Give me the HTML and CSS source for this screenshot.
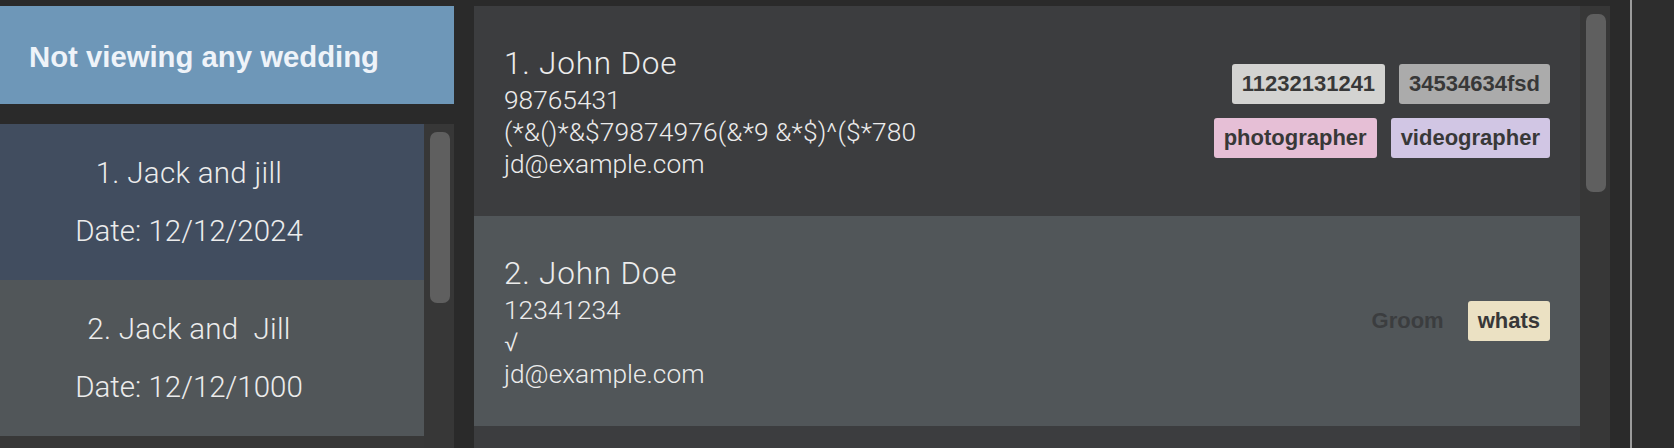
FILE: index.html
```html
<!DOCTYPE html>
<html lang="en">
<head>
<meta charset="utf-8">
<title>Weddings</title>
<link rel="stylesheet" href="styles.css">
</head>
<body>
<div class="app">
  <aside class="sidebar">
    <div class="wedding-banner">Not viewing any wedding</div>
    <div class="wedding-list">
      <div class="wedding-items">
        <div class="wedding-item selected">
          <div class="wedding-name">1. Jack and jill</div>
          <div class="wedding-date">Date: 12/12/2024</div>
        </div>
        <div class="wedding-item">
          <div class="wedding-name">2. Jack and  Jill</div>
          <div class="wedding-date">Date: 12/12/1000</div>
        </div>
      </div>
      <div class="scroll-track">
        <div class="scroll-thumb short"></div>
      </div>
    </div>
  </aside>

  <main class="person-panel">
    <div class="person-list">
      <div class="person-card">
        <div class="person-info">
          <div class="person-name">1. John Doe</div>
          <div class="person-line">98765431</div>
          <div class="person-line address">(*&amp;()*&amp;$79874976(&amp;*9 &amp;*$)^($*780</div>
          <div class="person-line">jd@example.com</div>
        </div>
        <div class="tags">
          <span class="tag tag-silver">11232131241</span>
          <span class="tag tag-grey">34534634fsd</span>
          <span class="tag tag-pink">photographer</span>
          <span class="tag tag-lilac">videographer</span>
        </div>
      </div>
      <div class="person-card alt">
        <div class="person-info">
          <div class="person-name">2. John Doe</div>
          <div class="person-line">12341234</div>
          <div class="person-line address">√</div>
          <div class="person-line">jd@example.com</div>
        </div>
        <div class="tags">
          <span class="tag tag-role">Groom</span>
          <span class="tag tag-cream">whats</span>
        </div>
      </div>
    </div>
    <div class="scroll-track">
      <div class="scroll-thumb tall"></div>
    </div>
  </main>

  <div class="edge">
    <div class="edge-line"></div>
    <div class="edge-fill"></div>
  </div>
</div>
</body>
</html>
```

FILE: styles.css
```css
html, body {
  margin: 0;
  padding: 0;
}

body {
  background: #2a2a2a;
  font-family: "Liberation Sans", Arial, sans-serif;
  overflow: hidden;
}

.app {
  display: flex;
  gap: 20px;
  height: 448px;
  overflow: hidden;
}

/* ---------- left column ---------- */
.sidebar {
  width: 454px;
  flex: none;
  margin-top: 6px;
  display: flex;
  flex-direction: column;
  gap: 20px;
}

.wedding-banner {
  height: 98px;
  box-sizing: border-box;
  padding: 3px 0 0 29px;
  display: flex;
  align-items: center;
  background: #6e97b8;
  color: #eef3f9;
  font-size: 29.3px;
  font-weight: bold;
}

.wedding-list {
  flex: 1;
  display: flex;
  background: #383838;
}

.wedding-items {
  width: 424px;
  flex: none;
}

.wedding-item {
  height: 156px;
  box-sizing: border-box;
  padding-right: 46px;
  display: flex;
  flex-direction: column;
  align-items: center;
  justify-content: center;
  gap: 24px;
  background: #515659;
  color: #ececec;
  font-family: Roboto, "Liberation Sans", sans-serif;
  font-weight: 300;
  font-size: 29.5px;
  line-height: 34px;
  white-space: pre;
}

.wedding-name {
  letter-spacing: 0.3px;
}

.wedding-item.selected {
  background: #414d5f;
}

.scroll-track {
  width: 30px;
  flex: none;
  box-sizing: border-box;
  padding: 8px 4px 0 6px;
  background: #373737;
}

.scroll-thumb {
  background: #5f5f5f;
  border-radius: 7px;
}

.scroll-thumb.short {
  height: 171px;
}

.scroll-thumb.tall {
  height: 178px;
}

/* ---------- person panel ---------- */
.person-panel {
  width: 1136px;
  flex: none;
  margin-top: 6px;
  display: flex;
  background: #3c3d3f;
}

.person-list {
  flex: 1;
}

.person-card {
  height: 210px;
  box-sizing: border-box;
  padding: 0 30px;
  display: flex;
  align-items: center;
  justify-content: space-between;
  background: #3c3d3f;
}

.person-card.alt {
  background: #515659;
}

.person-info {
  margin-top: 2px;
  color: #ececec;
  font-family: Roboto, "Liberation Sans", sans-serif;
  font-weight: 300;
  font-size: 26.3px;
  line-height: 32px;
  white-space: nowrap;
}

.person-name {
  font-size: 31.5px;
  line-height: 40px;
  letter-spacing: 0.8px;
}

.person-line.address {
  letter-spacing: 0.15px;
}

.tags {
  width: 350px;
  display: flex;
  flex-wrap: wrap;
  justify-content: flex-end;
  gap: 14px;
}

.tag {
  padding: 7px 10px;
  border-radius: 3px;
  font-size: 22px;
  font-weight: bold;
  line-height: 26px;
  color: #383838;
}

.tag-silver { background: #d3d3d1; }
.tag-grey { background: #ababab; }
.tag-pink { background: #e6bfd6; }
.tag-lilac { background: #d1c6e4; }
.tag-cream { background: #ebe1c3; }
.tag-role {
  background: transparent;
  color: #3b3d3f;
}

/* ---------- right edge ---------- */
.edge {
  flex: 1;
  display: flex;
}

.edge-line {
  width: 2px;
  background: #9b9b9b;
}

.edge-fill {
  flex: 1;
  background: #2d2d2d;
}
```
